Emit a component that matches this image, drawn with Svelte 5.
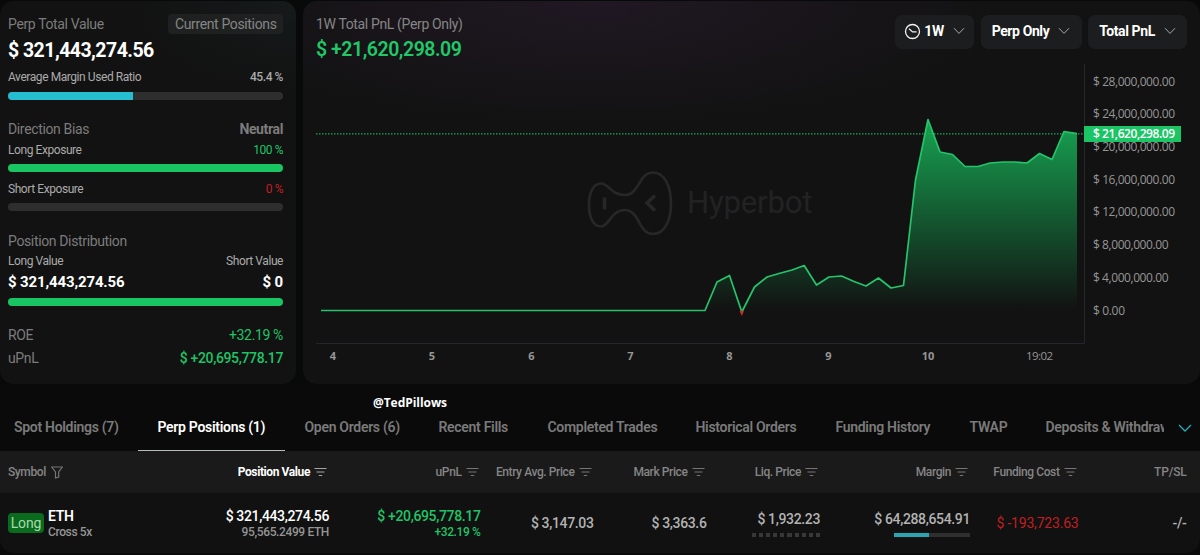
<script>
  const points = [
    [321, 310.5], [705, 310.5], [717, 282], [729.5, 275.5], [741.8, 312], [754.5, 287],
    [767, 277], [779, 273.5], [792, 270], [804.2, 265.5], [816.5, 285], [829, 277],
    [841.5, 276], [854, 281.5], [866, 286], [878.5, 278], [891, 288], [903.5, 285.5],
    [915.5, 180], [928, 119.5], [940, 152], [952.5, 154.5], [965, 166.5], [978, 166.5],
    [990, 163], [1003, 162], [1015, 162], [1027, 163], [1039.5, 153.5], [1052, 159.5],
    [1064, 131.5], [1077, 133.5]
  ];
  const line = points.map((p) => p.join(',')).join(' ');
  const area = `${line} 1077,310.5 321,310.5`;

  const yTicks = [
    [81.5, '$ 28,000,000.00', 82], [114, '$ 24,000,000.00', 82], [146.8, '$ 20,000,000.00', 82],
    [179.8, '$ 16,000,000.00', 82], [212.2, '$ 12,000,000.00', 82], [245.4, '$ 8,000,000.00', 75.5],
    [278, '$ 4,000,000.00', 75.5], [311.2, '$ 0.00', 32]
  ];
  const xTicks = [
    [333, '4'], [432, '5'], [531.5, '6'], [630.5, '7'], [729.5, '8'], [828.5, '9'], [928, '10']
  ];
  const tabs = [
    ['Spot Holdings (7)', 138], ['Perp Positions (1)', 147], ['Open Orders (6)', 134],
    ['Recent Fills', 109], ['Completed Trades', 148], ['Historical Orders', 140],
    ['Funding History', 134], ['TWAP', 76], ['Deposits & Withdrawals', 180]
  ];
  const heads = ['Position Value', 'uPnL', 'Entry Avg. Price', 'Mark Price', 'Liq. Price', 'Margin', 'Funding Cost'];
</script>

{#snippet chevron()}
  <svg class="chev" width="12" height="8" viewBox="0 0 12 8"><path d="M1 1.2 6 6.4 11 1.2" /></svg>
{/snippet}

<div class="page">
  <div class="top">
    <section class="card summary">
      <div class="row title"><span>Perp Total Value</span><span class="chip">Current Positions</span></div>
      <div class="row total"><b>$ 321,443,274.56</b></div>
      <div class="row small r3"><span>Average Margin Used Ratio</span><span class="med">45.4 %</span></div>
      <div class="bar"><i class="cyan" style="width: 45.4%"></i></div>
      <div class="row title g19"><span>Direction Bias</span><span class="bold">Neutral</span></div>
      <div class="row small low"><span>Long Exposure</span><span class="green">100 %</span></div>
      <div class="bar"><i style="width: 100%"></i></div>
      <div class="row small low r6"><span>Short Exposure</span><span class="red">0 %</span></div>
      <div class="bar"></div>
      <div class="row title g19 low1"><span>Position Distribution</span></div>
      <div class="row small low"><span>Long Value</span><span>Short Value</span></div>
      <div class="row value"><b>$ 321,443,274.56</b><b>$ 0</b></div>
      <div class="bar last"><i style="width: 100%"></i></div>
      <div class="row title g19 low1"><span>ROE</span><span class="green">+32.19 %</span></div>
      <div class="row title r3"><span>uPnL</span><span class="green med">$ +20,695,778.17</span></div>
    </section>

    <section class="card chart">
      <header>
        <div>
          <div class="ctitle">1W Total PnL (Perp Only)</div>
          <div class="pnl">$ +21,620,298.09</div>
        </div>
        <div class="selects">
          <button style="width: 79px">
            <svg width="17" height="17" viewBox="0 0 17 17" class="clock"><circle cx="8.5" cy="8.5" r="7" /><path d="M5 5.8 8.6 8.9H12.6" /></svg>
            <span>1W</span>{@render chevron()}
          </button>
          <button style="width: 101px"><span>Perp Only</span>{@render chevron()}</button>
          <button style="width: 99px"><span>Total PnL</span>{@render chevron()}</button>
        </div>
      </header>
      <svg class="plot" width="897" height="320" viewBox="303 64 897 320">
        <defs>
          <linearGradient id="fill" gradientUnits="userSpaceOnUse" x1="0" y1="119" x2="0" y2="310">
            <stop offset="0" stop-color="#17b358" stop-opacity=".9" />
            <stop offset="1" stop-color="#17b358" stop-opacity="0" />
          </linearGradient>
        </defs>
        <g class="mark">
          <path d="M601 183.5C609 183.5 611 195 624.5 195C640 195 638 172.5 653 172.5C665 172.5 671 187 671 203.5C671 220 665 234 653 234C638 234 640 210 624.5 210C611 210 609 226.5 601 226.5C593 226.5 589 217 589 205C589 193 593 183.5 601 183.5Z" />
          <path class="eye" d="M604.5 197.500V209.500M655 195.500 647 203 655 210.500" />
          <text x="687" y="213" textLength="125">Hyperbot</text>
        </g>
        <path class="axis" d="M316 343.500H1084.500V64" />
        <path class="now" d="M316 133.800H1084" />
        <polygon points={area} fill="url(#fill)" />
        <polyline points={line} />
        <path class="neg" d="M740.600 310.800 741.800 313.500 743 310.800" />
        {#each yTicks as [y, label, w]}
          <text class="tick" x="1093" y={y + 4} textLength={w}>{label}</text>
        {/each}
        <rect x="1084" y="126" width="97" height="16" fill="#1bc464" />
        <text class="tick cur" x="1093" y="138.200" textLength="82">$ 21,620,298.09</text>
        {#each xTicks as [x, label]}
          <text class="tick day" {x} y="360">{label}</text>
        {/each}
        <text class="tick time" x="1026" y="360" textLength="27">19:02</text>
      </svg>
    </section>
  </div>

  <div class="handle">@TedPillows</div>
  <nav>
    <div class="tabs">
      {#each tabs as [name, w], i}
        <div class="tab" class:active={i === 1} style="width: {w}px">{name}</div>
      {/each}
    </div>
    <div class="more"><svg width="16" height="10" viewBox="0 0 16 10"><path d="M2 2 8 8 14 2" /></svg></div>
  </nav>

  <div class="grid thead">
    <div class="sym">Symbol
      <svg width="12" height="13" viewBox="0 0 12 13"><path d="M.7 1H11.300L7.700 6V11L4.500 12V6Z" /></svg>
    </div>
    {#each heads as h, i}
      <div class="th" class:sorted={i === 0}>{h}
        <svg width="13" height="10" viewBox="0 0 13 10"><path d="M.5 1.500H12.500M2.500 5H10.500M4.800 8.500H8.200" /></svg>
      </div>
    {/each}
    <div class="th tp">TP/SL</div>
  </div>

  <div class="grid trow">
    <div class="asset">
      <span class="long">Long</span>
      <div><div class="coin">ETH</div><div class="sub">Cross 5x</div></div>
    </div>
    <div class="two"><div class="white">$ 321,443,274.56</div><div class="sub">95,565.2499 ETH</div></div>
    <div class="two green"><div>$ +20,695,778.17</div><div class="sub">+32.19 %</div></div>
    <div>$ 3,147.03</div>
    <div>$ 3,363.6</div>
    <div class="liq"><div>$ 1,932.23</div><div class="dots"></div></div>
    <div class="liq"><div>$ 64,288,654.91</div><div class="mbar"><i style="width: 46%"></i></div></div>
    <div class="red fund">$ -193,723.63</div>
    <div>-/-</div>
  </div>
</div>

<style>
  :global(body) { margin: 0; background: #070707; }
  .page {
    width: 1200px; height: 555px; overflow: hidden; background: #0a0a0a;
    font-family: Roboto, sans-serif; font-size: 14px; color: #b3b3b3; letter-spacing: -.36px;
    white-space: nowrap;
  }
  .top { display: flex; gap: 7px; height: 384px; background: #080909; }
  .card { background: #121212; box-sizing: border-box; border-radius: 14px; margin-top: 1px; height: 383px; }
  .summary { width: 296px; padding: 11px 13px 0 8px; background: radial-gradient(ellipse 160px 90px at 100% 0, #151a1b, #121212); }
  .row { display: flex; justify-content: space-between; align-items: center; height: 20px; }
  .title { color: #7c7c7c; }
  .title:first-child { height: 24px; }
  .chip { background: #1f2121; color: #858585; border-radius: 4px; padding: 0 6.500px; height: 20px; line-height: 20px; }
  .total { height: 28px; color: #fff; font-size: 19.500px; letter-spacing: -.54px; }
  .small { font-size: 12px; color: #ababab; letter-spacing: -.43px; }
  .low, .low1 { box-sizing: border-box; padding-top: 1.500px; }
  .r3 { margin-top: 3px; }
  .r6 { margin-top: 6px; }
  .g19 { margin-top: 19px; }
  .med { font-weight: 500; }
  .bold { font-weight: 700; }
  .green { color: #1fc467; }
  .red { color: #c01f22; }
  .value { height: 24px; color: #fff; font-size: 15px; letter-spacing: -.14px; }
  .bar { height: 8px; border-radius: 4px; background: #2e2e2e; margin-top: 5px; overflow: hidden; }
  .bar.last { margin-top: 3.500px; }
  .bar i { display: block; height: 100%; background: #18c562; }
  .bar i.cyan { background: #25bdd0; }

  .chart { width: 897px; background: radial-gradient(ellipse 420px 125px at 290px 0, #201823, #121212), #121212; }
  header { display: flex; justify-content: space-between; height: 63px; padding: 0 13px; }
  .ctitle { height: 20px; line-height: 20px; margin-top: 13px; color: #858585; }
  .pnl { height: 28px; line-height: 28px; margin-top: 2px; font-size: 19.500px; font-weight: 600; color: #20c868; letter-spacing: -.46px; }
  .selects { display: flex; gap: 6.500px; margin-top: 13.500px; }
  button {
    display: flex; align-items: center; justify-content: center; gap: 9px; height: 34px; padding: 0 0 1px; border: 0;
    border-radius: 7px; background: #1c1d1e; color: #fff; font: 700 14px Roboto, sans-serif; letter-spacing: -.4px;
  }
  .chev { fill: none; stroke: #a8a8a8; stroke-width: 1; }
  .clock { fill: none; stroke: #f2f2f2; stroke-width: 1.3; margin-right: -6px; }
  .plot { display: block; }
  polyline { fill: none; stroke: #25c46b; stroke-width: 1.7; stroke-linejoin: round; }
  .neg { fill: none; stroke: #cf2a25; stroke-width: 2; }
  .axis { fill: none; stroke: #25262b; }
  .now { stroke: #23a85f; stroke-width: 1.300; stroke-dasharray: 1.500 1.500; }
  .mark path { fill: none; stroke: #272727; stroke-width: 2.700; }
  .mark .eye { stroke-width: 3.500; }
  .mark text { font: 31px Roboto, sans-serif; fill: #222; }
  .tick { font: 12px 'Open Sans', sans-serif; fill: #969696; letter-spacing: 0; }
  .cur { fill: #fff; font-weight: 600; }
  .day { text-anchor: middle; font-weight: 700; font-size: 11px; }
  .time { font-weight: 500; font-size: 11.500px; }

  .handle { height: 20px; margin-top: 9px; padding: 0 0 0 373px; color: #fff; font: 700 12px/20px 'Open Sans', sans-serif; letter-spacing: -.05px; }
  nav { display: flex; height: 38px; }
  .tabs { display: flex; width: 1164px; overflow: hidden; }
  .tab { flex: none; box-sizing: border-box; height: 38px; padding-left: 19.500px; line-height: 29px; font-weight: 600; color: #7a7a7a; letter-spacing: -.3px; }
  .tab:first-child { padding-left: 14px; }
  .tab.active { color: #fff; border-bottom: 1.500px solid #b5bdb9; }
  .more { width: 36px; padding: 7px 0 0 13px; box-sizing: border-box; }
  .more path { fill: none; stroke: #22aebb; stroke-width: 1.300; }

  .grid { display: grid; grid-template-columns: 192px 129px 151.500px 113px 113px 113.500px 150px 108.500px 108px; padding-left: 8px; align-items: center; }
  .thead { height: 42px; background: #1a1a1a; font-size: 12px; font-weight: 500; color: #858585; letter-spacing: -.4px; }
  .sym, .th { display: flex; align-items: center; gap: 4px; }
  .sym { gap: 5px; }
  .th { justify-content: flex-end; padding-right: 2px; }
  .tp { padding-right: 0; letter-spacing: -.2px; }
  .thead svg { fill: none; stroke: #757575; stroke-width: 1.200; }
  .sorted { color: #fff; font-weight: 700; }
  .thead .sorted svg { stroke: #a5a5a5; }
  .trow { height: 60px; background: #111; text-align: right; font-weight: 500; border-radius: 0 0 14px 14px; }
  .asset { display: flex; align-items: center; gap: 4px; text-align: left; }
  .asset > div, .two { padding-top: 2px; }
  .asset .coin, .white { color: #fff; }
  .coin { font-weight: 600; }
  .long { width: 36px; height: 20px; border-radius: 4px; background: #0a6a1e; color: #a7dbac; text-align: center; line-height: 20px; font-weight: 400; letter-spacing: -.15px; }
  .coin, .two > div:first-child { height: 16px; line-height: 16px; }
  .sub { font-size: 12px; height: 16px; line-height: 16px; color: #959595; letter-spacing: -.38px; }
  .green .sub { color: inherit; }
  .fund { font-weight: 400; letter-spacing: -.2px; }
  .liq > div:first-child { line-height: 17px; padding-top: 1px; }
  .dots { width: 68px; height: 4px; margin: 5px 0 0 auto; background: repeating-linear-gradient(90deg, #383838 0 4px, transparent 4px 7.100px); }
  .mbar { width: 76px; height: 4px; margin: 5px 0 0 auto; background: #2f2f2f; }
  .mbar i { display: block; height: 100%; background: #2ba5b4; }
</style>
